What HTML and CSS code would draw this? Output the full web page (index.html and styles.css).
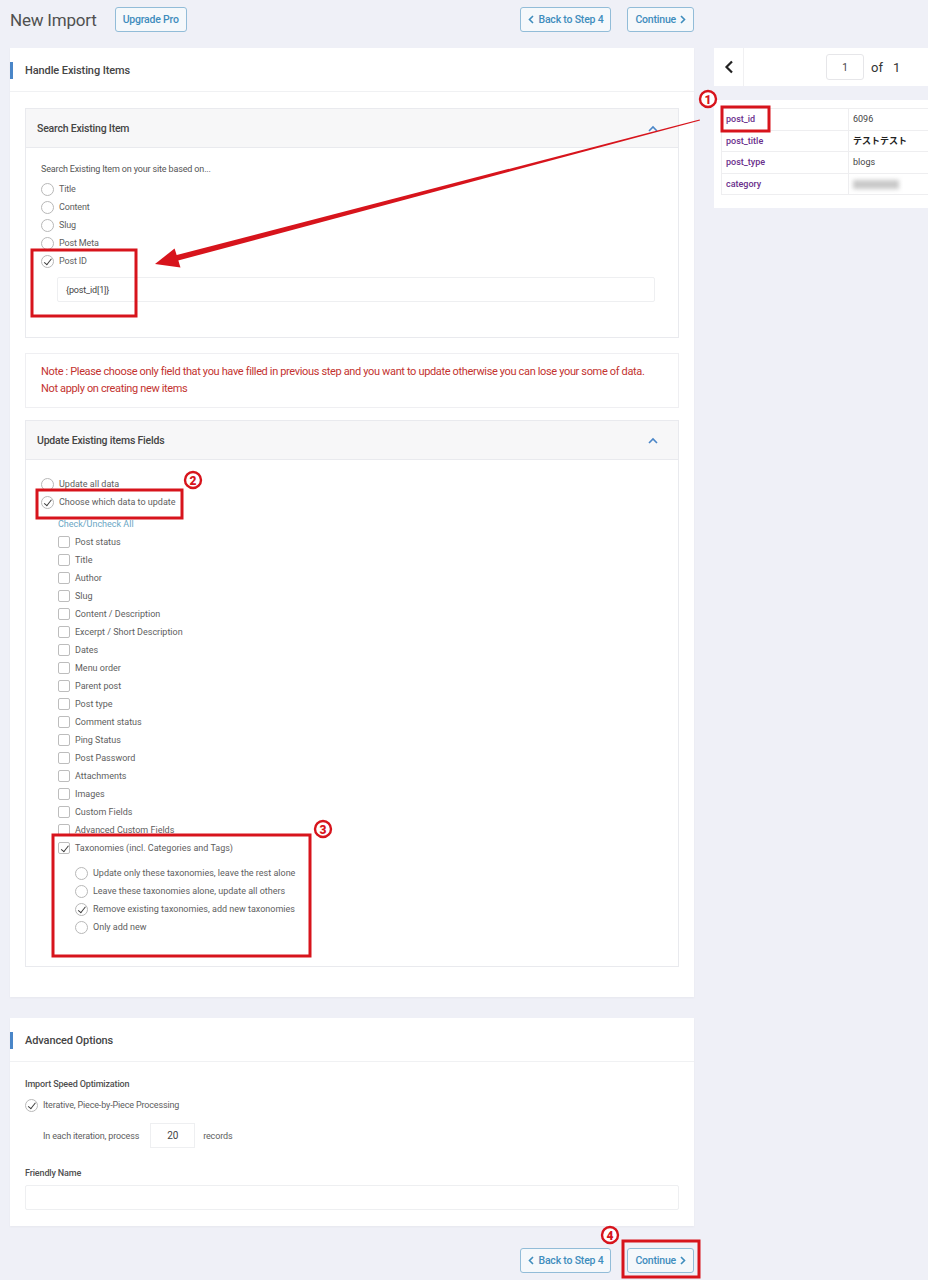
FILE: index.html
```html
<!DOCTYPE html>
<html>
  <head>
    <title>New Import</title>
    <link rel="stylesheet" href="styles.css">
  </head>
  <body>
    <div class="page">
      <div class="main-col">
        <div class="topbar">
          <h1>New Import</h1>
          <button class="btn">Upgrade Pro</button>
          <div class="spacer"></div>
          <button class="btn"><svg width="6" height="9" viewBox="0 0 6 9"><polyline points="5,1 1.5,4.5 5,8" fill="none" stroke="currentColor" stroke-width="1.6"/></svg>Back to Step 4</button>
          <button class="btn">Continue<svg width="6" height="9" viewBox="0 0 6 9"><polyline points="1,1 4.5,4.5 1,8" fill="none" stroke="currentColor" stroke-width="1.6"/></svg></button>
        </div>

        <section class="card">
          <div class="card-head"><h2>Handle Existing Items</h2></div>
          <div class="card-body">
            <div class="panel">
              <div class="panel-head">
                <span>Search Existing Item</span>
                <svg width="10" height="7" viewBox="0 0 10 7"><polyline points="1,6 5,2 9,6" fill="none" stroke="#4a86c8" stroke-width="1.6"/></svg>
              </div>
              <div class="panel-body search">
                <p class="hint">Search Existing Item on your site based on...</p>
                <ul class="opts">
                  <li class="opt"><span class="radio"></span>Title</li>
                  <li class="opt"><span class="radio"></span>Content</li>
                  <li class="opt"><span class="radio"></span>Slug</li>
                  <li class="opt"><span class="radio"></span>Post Meta</li>
                  <li class="opt"><span class="radio on"></span>Post ID</li>
                </ul>
                <div class="field id-field">{post_id[1]}</div>
              </div>
            </div>

            <div class="note">
              Note : Please choose only field that you have filled in previous step and you want to update otherwise you can lose your some of data.<br>
              Not apply on creating new items
            </div>

            <div class="panel update">
              <div class="panel-head">
                <span>Update Existing items Fields</span>
                <svg width="10" height="7" viewBox="0 0 10 7"><polyline points="1,6 5,2 9,6" fill="none" stroke="#4a86c8" stroke-width="1.6"/></svg>
              </div>
              <div class="panel-body fields">
                <ul class="opts">
                  <li class="opt"><span class="radio"></span>Update all data</li>
                  <li class="opt"><span class="radio on"></span>Choose which data to update</li>
                </ul>
                <div class="field-list">
                  <a class="toggle-all">Check/Uncheck All</a>
                  <ul class="opts">
                    <li class="opt"><span class="box"></span>Post status</li>
                    <li class="opt"><span class="box"></span>Title</li>
                    <li class="opt"><span class="box"></span>Author</li>
                    <li class="opt"><span class="box"></span>Slug</li>
                    <li class="opt"><span class="box"></span>Content / Description</li>
                    <li class="opt"><span class="box"></span>Excerpt / Short Description</li>
                    <li class="opt"><span class="box"></span>Dates</li>
                    <li class="opt"><span class="box"></span>Menu order</li>
                    <li class="opt"><span class="box"></span>Parent post</li>
                    <li class="opt"><span class="box"></span>Post type</li>
                    <li class="opt"><span class="box"></span>Comment status</li>
                    <li class="opt"><span class="box"></span>Ping Status</li>
                    <li class="opt"><span class="box"></span>Post Password</li>
                    <li class="opt"><span class="box"></span>Attachments</li>
                    <li class="opt"><span class="box"></span>Images</li>
                    <li class="opt"><span class="box"></span>Custom Fields</li>
                    <li class="opt"><span class="box"></span>Advanced Custom Fields</li>
                    <li class="opt"><span class="box on"></span>Taxonomies (incl. Categories and Tags)</li>
                  </ul>
                  <ul class="opts sub">
                    <li class="opt"><span class="radio"></span>Update only these taxonomies, leave the rest alone</li>
                    <li class="opt"><span class="radio"></span>Leave these taxonomies alone, update all others</li>
                    <li class="opt"><span class="radio on"></span>Remove existing taxonomies, add new taxonomies</li>
                    <li class="opt"><span class="radio"></span>Only add new</li>
                  </ul>
                </div>
              </div>
            </div>
          </div>
        </section>

        <section class="card adv">
          <div class="card-head"><h2>Advanced Options</h2></div>
          <div class="card-body">
            <p class="label">Import Speed Optimization</p>
            <div class="opt speed"><span class="radio on"></span>Iterative, Piece-by-Piece Processing</div>
            <div class="iter">
              <span>In each iteration, process</span>
              <div class="num">20</div>
              <span>records</span>
            </div>
            <p class="label friendly">Friendly Name</p>
            <div class="field name-field"></div>
          </div>
        </section>

        <div class="footer">
          <button class="btn"><svg width="6" height="9" viewBox="0 0 6 9"><polyline points="5,1 1.5,4.5 5,8" fill="none" stroke="currentColor" stroke-width="1.6"/></svg>Back to Step 4</button>
          <button class="btn">Continue<svg width="6" height="9" viewBox="0 0 6 9"><polyline points="1,1 4.5,4.5 1,8" fill="none" stroke="currentColor" stroke-width="1.6"/></svg></button>
        </div>
      </div>

      <aside class="side">
        <div class="pager">
          <div class="prev"><svg width="10" height="14" viewBox="0 0 10 14"><polyline points="8,1.5 2.5,7 8,12.5" fill="none" stroke="#222" stroke-width="2.2"/></svg></div>
          <div class="page-no">1</div>
          <span class="of">of</span>
          <span class="total">1</span>
        </div>
        <div class="record">
          <table>
            <tr><td class="key">post_id</td><td>6096</td></tr>
            <tr><td class="key">post_title</td><td class="strong">テストテスト</td></tr>
            <tr><td class="key">post_type</td><td>blogs</td></tr>
            <tr><td class="key">category</td><td><span class="blur"></span></td></tr>
          </table>
        </div>
      </aside>
    </div>

    <svg class="marks" width="928" height="1280" viewBox="0 0 928 1280">
      <g fill="none" stroke="#d7141c" stroke-width="3">
        <rect x="722" y="107" width="47" height="24"/>
        <rect x="32" y="250" width="104" height="66"/>
        <rect x="37" y="490" width="145" height="28"/>
        <rect x="53" y="835" width="257" height="121"/>
        <rect x="623" y="1241" width="76" height="36"/>
      </g>
      <polygon fill="#d7141c" points="700,120.5 177.2,260.8 175.8,255.2 699.6,119.5"/>
      <polygon fill="#d7141c" points="155,264 180.5,267.5 174.6,248.5"/>
      <g class="num-mark">
        <circle cx="708" cy="99" r="8"/><text x="708" y="103.5">1</text>
        <circle cx="193" cy="480" r="8"/><text x="193" y="484.5">2</text>
        <circle cx="323" cy="829" r="8"/><text x="323" y="833.5">3</text>
        <circle cx="610" cy="1235" r="8"/><text x="610" y="1239.5">4</text>
      </g>
    </svg>
  </body>
</html>
```

FILE: styles.css
```css
:root {
  --bg: #eff0f7;
  --card: #ffffff;
  --line: #e9eaee;
  --text: #5e5e5e;
  --head: #454545;
  --blue: #4a86c8;
  --btn: #3f8dbd;
  --red: #c3332f;
  --mark: #d7141c;
}

* {
  margin: 0;
  padding: 0;
  box-sizing: border-box;
}

body {
  width: 928px;
  height: 1280px;
  overflow: hidden;
  position: relative;
  font-family: Roboto, "Liberation Sans", sans-serif;
  background: var(--bg);
  color: var(--text);
}

ul {
  list-style: none;
}

.page {
  display: flex;
  padding-left: 10px;
}

.main-col {
  width: 684px;
  flex: none;
}

/* top bar */
.topbar {
  display: flex;
  align-items: center;
  gap: 16px;
  height: 25px;
  margin: 7px 0 16px;
}

.topbar h1 {
  font-size: 17px;
  font-weight: 400;
  color: #505050;
  letter-spacing: -0.2px;
  margin-right: 2px;
}

.spacer {
  flex: 1;
}

.btn {
  height: 25px;
  display: inline-flex;
  align-items: center;
  gap: 4px;
  padding: 0 7px;
  background: #f5f8fb;
  border: 1px solid #92bcd8;
  border-radius: 3px;
  color: var(--btn);
  font-family: Roboto, sans-serif;
  font-size: 10.5px;
  font-weight: 500;
  letter-spacing: -0.2px;
}

/* cards */
.card {
  background: var(--card);
  box-shadow: 0 1px 2px rgba(0, 0, 0, 0.04);
}

.card-head {
  height: 44px;
  display: flex;
  align-items: center;
  border-bottom: 1px solid #f0f1f3;
}

.card-head h2 {
  border-left: 3px solid var(--blue);
  padding-left: 12px;
  line-height: 17px;
  font-size: 11px;
  font-weight: 500;
  color: var(--head);
  letter-spacing: -0.1px;
  margin-top: 2px;
}

.card-body {
  padding: 16px 15px 30px;
}

.panel {
  border: 1px solid var(--line);
}

.panel-head {
  height: 39px;
  display: flex;
  align-items: center;
  justify-content: space-between;
  padding: 0 20px 0 11px;
  background: #f7f7f8;
  border-bottom: 1px solid var(--line);
  font-size: 10.5px;
  font-weight: 500;
  color: var(--head);
  letter-spacing: -0.2px;
}

.panel-body {
  padding: 12px 23px 35px 15px;
  font-size: 9px;
}

.search {
  letter-spacing: -0.15px;
}

.hint {
  line-height: 18px;
  margin-bottom: 2px;
  color: #555;
}

.opt {
  display: flex;
  align-items: center;
  gap: 5px;
  height: 18px;
  color: var(--text);
}

.radio {
  position: relative;
  width: 13px;
  height: 13px;
  flex: none;
  border: 1px solid #b8b8b8;
  border-radius: 50%;
  background: #fff;
}

.box {
  position: relative;
  width: 12px;
  height: 12px;
  flex: none;
  border: 1px solid #bdbdbd;
  border-radius: 2px;
  background: #fff;
}

.radio.on::after,
.box.on::after {
  content: "";
  position: absolute;
  left: 3.8px;
  top: 1.2px;
  width: 3px;
  height: 6.5px;
  border: solid #3c3c3c;
  border-width: 0 1.3px 1.3px 0;
  transform: rotate(38deg);
}

.field {
  height: 25px;
  border: 1px solid #eeeff1;
  border-radius: 2px;
  background: #fff;
  display: flex;
  align-items: center;
  padding-left: 8px;
  font-size: 9px;
  color: #444;
}

.id-field {
  margin: 7px 0 0 16px;
}

.note {
  margin: 15px 0 12px;
  padding: 9px 15px 10px;
  border: 1px solid #efeff2;
  color: var(--red);
  font-size: 11px;
  line-height: 17px;
  letter-spacing: -0.35px;
}

.fields {
  padding: 15px 20px 30px 15px;
}

.field-list {
  margin-left: 17px;
}

.toggle-all {
  display: block;
  line-height: 18px;
  margin-top: 4px;
  color: #6aa6c4;
}

.sub {
  margin: 7px 0 0 17px;
}

/* advanced */
.adv {
  margin-top: 21px;
}

.adv .card-body {
  padding: 13px 15px 16px;
  font-size: 9px;
  letter-spacing: -0.15px;
}

.label {
  line-height: 18px;
  font-weight: 500;
  color: #505050;
}

.speed {
  margin-top: 3px;
}

.iter {
  display: flex;
  align-items: center;
  gap: 9px;
  margin: 9px 0 0 18px;
  color: var(--text);
}

.num {
  width: 45px;
  height: 25px;
  border: 1px solid #eeeff1;
  display: flex;
  align-items: center;
  justify-content: center;
  color: #444;
  font-size: 10px;
  margin: 0 -1px 0 2px;
}

.friendly {
  margin-top: 16px;
}

.name-field {
  margin-top: 3px;
}

.footer {
  display: flex;
  justify-content: flex-end;
  gap: 16px;
  margin-top: 22px;
}

/* side preview */
.side {
  flex: none;
  width: 240px;
  margin: 48px 0 0 20px;
}

.pager {
  height: 38px;
  display: flex;
  align-items: center;
  background: var(--card);
}

.prev {
  width: 30px;
  height: 38px;
  display: flex;
  align-items: center;
  justify-content: center;
  border-right: 1px solid #f0f0f2;
}

.page-no {
  width: 38px;
  height: 26px;
  margin-left: 82px;
  border: 1px solid #e6e6e9;
  border-radius: 3px;
  display: flex;
  align-items: center;
  justify-content: center;
  font-size: 10px;
  color: #444;
}

.of {
  margin-left: 7px;
  font-size: 13px;
  color: #333;
}

.total {
  margin-left: 10px;
  font-size: 13px;
  color: #333;
}

.record {
  margin-top: 14px;
  background: var(--card);
  padding: 8px 0 13px 7px;
}

.record table {
  border-collapse: collapse;
  width: 240px;
  font-size: 9px;
}

.record td {
  height: 21.5px;
  border: 1px solid #eeeef0;
  padding-left: 4px;
  color: #444;
}

.record td.key {
  width: 127px;
  color: #6a2f8c;
  font-weight: 500;
}

.record td.strong {
  font-weight: 700;
  color: #222;
  font-family: "Noto Sans CJK JP", sans-serif;
}

.blur {
  display: inline-block;
  width: 46px;
  height: 9px;
  background: #c9c9c9;
  filter: blur(2px);
  vertical-align: middle;
}

/* screenshot annotations */
.marks {
  position: absolute;
  top: 0;
  left: 0;
  pointer-events: none;
}

.num-mark circle {
  fill: #fff;
  stroke: var(--mark);
  stroke-width: 2.4;
}

.num-mark text {
  fill: var(--mark);
  font-family: Roboto, sans-serif;
  font-size: 12px;
  font-weight: 900;
  text-anchor: middle;
}
```
